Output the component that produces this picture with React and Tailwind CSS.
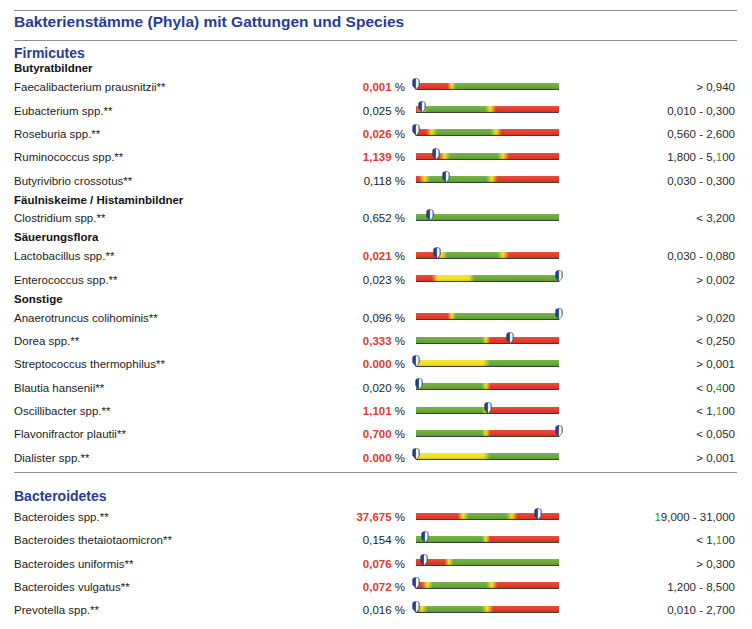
import React from 'react';

const R = '#e63a2b';
const Y = '#f4e21e';
const G = '#69aa3b';

// colour stop helpers for the bars (positions in % of bar width)
const clamp = (n) => Math.max(0, Math.min(100, n));
const twoSided = (a, b, w = 4) => [
  [R, 0], [R, clamp(a - w)], [Y, a], [G, a + w], [G, b - w], [Y, b], [R, b + w], [R, 100],
];
const greater = (a, w = 3) => [[R, 0], [R, a - w], [Y, a], [G, a + w], [G, 100]];
const less = (a, w = 3) => [[G, 0], [G, a - w], [Y, a], [R, a + w], [R, 100]];
const yellowGreen = [[Y, 0], [Y, 47], [G, 52], [G, 100]];
const greenOnly = [[G, 0], [G, 100]];

const sections = [
  {
    title: 'Firmicutes',
    groups: [
      {
        name: 'Butyratbildner',
        items: [
          { name: 'Faecalibacterium prausnitzii**', value: '0,001', high: true, range: '> 0,940', stops: greater(25), marker: 0 },
          { name: 'Eubacterium spp.**', value: '0,025', range: '0,010 - 0,300', stops: twoSided(4, 52), marker: 4 },
          { name: 'Roseburia spp.**', value: '0,026', high: true, range: '0,560 - 2,600', stops: twoSided(11, 56), marker: 0 },
          { name: 'Ruminococcus spp.**', value: '1,139', high: true, range: '1,800 - 5,[1]00', stops: twoSided(20, 61), marker: 14 },
          { name: 'Butyrivibrio crossotus**', value: '0,118', range: '0,030 - 0,300', stops: twoSided(6, 53), marker: 21 },
        ],
      },
      {
        name: 'Fäulniskeime / Histaminbildner',
        items: [
          { name: 'Clostridium spp.**', value: '0,652', range: '< 3,200', stops: greenOnly, marker: 10 },
        ],
      },
      {
        name: 'Säuerungsflora',
        items: [
          { name: 'Lactobacillus spp.**', value: '0,021', high: true, range: '0,030 - 0,080', stops: twoSided(18, 61), marker: 15 },
          { name: 'Enterococcus spp.**', value: '0,023', range: '> 0,002', stops: [[R, 0], [R, 11], [Y, 15], [Y, 37], [G, 41], [G, 100]], marker: 100 },
        ],
      },
      {
        name: 'Sonstige',
        items: [
          { name: 'Anaerotruncus colihominis**', value: '0,096', range: '> 0,020', stops: greater(25), marker: 100 },
          { name: 'Dorea spp.**', value: '0,333', high: true, range: '< 0,250', stops: less(49), marker: 66 },
          { name: 'Streptococcus thermophilus**', value: '0.000', high: true, range: '> 0,001', stops: yellowGreen, marker: 0 },
          { name: 'Blautia hansenii**', value: '0,020', range: '< 0,[4]00', stops: less(49), marker: 2 },
          { name: 'Oscillibacter spp.**', value: '1,101', high: true, range: '< 1,[1]00', stops: less(49), marker: 50 },
          { name: 'Flavonifractor plautii**', value: '0,700', high: true, range: '< 0,050', stops: less(49), marker: 100 },
          { name: 'Dialister spp.**', value: '0.000', high: true, range: '> 0,001', stops: yellowGreen, marker: 0 },
        ],
      },
    ],
  },
  {
    title: 'Bacteroidetes',
    groups: [
      {
        name: null,
        items: [
          { name: 'Bacteroides spp.**', value: '37,675', high: true, range: '[1]9,000 - 31,000', stops: twoSided(33, 67), marker: 85 },
          { name: 'Bacteroides thetaiotaomicron**', value: '0,154', range: '< 1,[1]00', stops: less(49), marker: 6 },
          { name: 'Bacteroides uniformis**', value: '0,076', high: true, range: '> 0,300', stops: greater(23), marker: 5.5 },
          { name: 'Bacteroides vulgatus**', value: '0,072', high: true, range: '1,200 - 8,500', stops: twoSided(8, 53), marker: 0 },
          { name: 'Prevotella spp.**', value: '0,016', range: '0,010 - 2,700', stops: twoSided(4, 50), marker: 0 },
        ],
      },
    ],
  },
];

// render "[x]" parts of the range in green (scan colour fringe)
const RangeText = ({ text }) => {
  const parts = text.split(/(\[[^\]]+\])/);
  return parts.map((p, i) =>
    p.startsWith('[') ? (
      <span key={i} className="text-[#3f9a2c]">{p.slice(1, -1)}</span>
    ) : (
      <span key={i}>{p}</span>
    )
  );
};

// blue/white pointer sitting on the bar
const Marker = () => (
  <svg width="8" height="12" viewBox="0 0 8 12" className="block">
    <defs>
      <linearGradient id="mk" x1="0" y1="0" x2="1" y2="0">
        <stop offset="0" stopColor="#17307a" />
        <stop offset="0.42" stopColor="#2c52ac" />
        <stop offset="0.58" stopColor="#f6f8ff" />
        <stop offset="0.78" stopColor="#ffffff" />
        <stop offset="1" stopColor="#5f7cc0" />
      </linearGradient>
    </defs>
    <path
      d="M0.7 2.6 Q0.7 0.5 4 0.5 Q7.3 0.5 7.3 2.6 L7.3 7.6 L4 11.7 L0.7 7.6 Z"
      fill="url(#mk)"
      stroke="#353a46"
      strokeWidth="0.6"
    />
  </svg>
);

const Bar = ({ stops, marker }) => {
  const gradient = `linear-gradient(to right, ${stops.map(([c, p]) => `${c} ${p}%`).join(', ')})`;
  return (
    <div className="relative w-[143px] h-[7px] -mt-[3px]">
      <div className="absolute inset-0 border-b-[1.5px] border-[#474741]" style={{ backgroundImage: gradient }} />
      <div className="absolute inset-0 bg-gradient-to-b from-white/10 via-transparent to-black/15" />
      <div className="absolute bottom-0 -translate-x-1/2" style={{ left: `${marker}%` }}>
        <Marker />
      </div>
    </div>
  );
};

const Row = ({ item }) => (
  <div className="flex items-center h-[23.33px] text-[11.5px] text-[#1c1c1c]">
    <div className="w-[326px] truncate">{item.name}</div>
    <div className="w-[65px] text-right whitespace-nowrap">
      <span className={item.high ? 'text-[#e3392c] font-bold' : ''}>{item.value}</span> %
    </div>
    <div className="w-[11px]" />
    <Bar stops={item.stops} marker={item.marker} />
    <div className="w-[176px] text-right text-[#2a2a2a] whitespace-nowrap">
      <RangeText text={item.range} />
    </div>
  </div>
);

const Section = ({ section, first }) => (
  <div>
    <div
      className={
        first
          ? 'mt-[3.5px] h-[17px] flex items-center text-[14px] font-bold text-[#283c93]'
          : 'mt-[14px] h-[19px] flex items-center text-[14px] font-bold text-[#283c93]'
      }
    >
      {section.title}
    </div>
    {section.groups.map((group, gi) => (
      <div key={gi}>
        {group.name && (
          <div className="h-[14.67px] flex items-center text-[11.5px] font-bold text-[#111]">
            {group.name}
          </div>
        )}
        {group.items.map((item) => (
          <Row key={item.name} item={item} />
        ))}
      </div>
    ))}
  </div>
);

export default function App() {
  return (
    <div
      className="min-h-screen bg-white pt-[10px] pl-[14px] pr-[15px]"
      style={{ fontFamily: '"Liberation Sans", Arial, sans-serif' }}
    >
      <div className="h-[31px] border-y border-[#8d9098] pt-[2px]">
        <div className="leading-[18px] text-[15.5px] font-bold text-[#283c93]">
          Bakterienstämme (Phyla) mit Gattungen und Species
        </div>
      </div>
      <Section section={sections[0]} first />
      <div className="mt-[1.8px] h-px bg-[#8d9098]" />
      <Section section={sections[1]} />
    </div>
  );
}
